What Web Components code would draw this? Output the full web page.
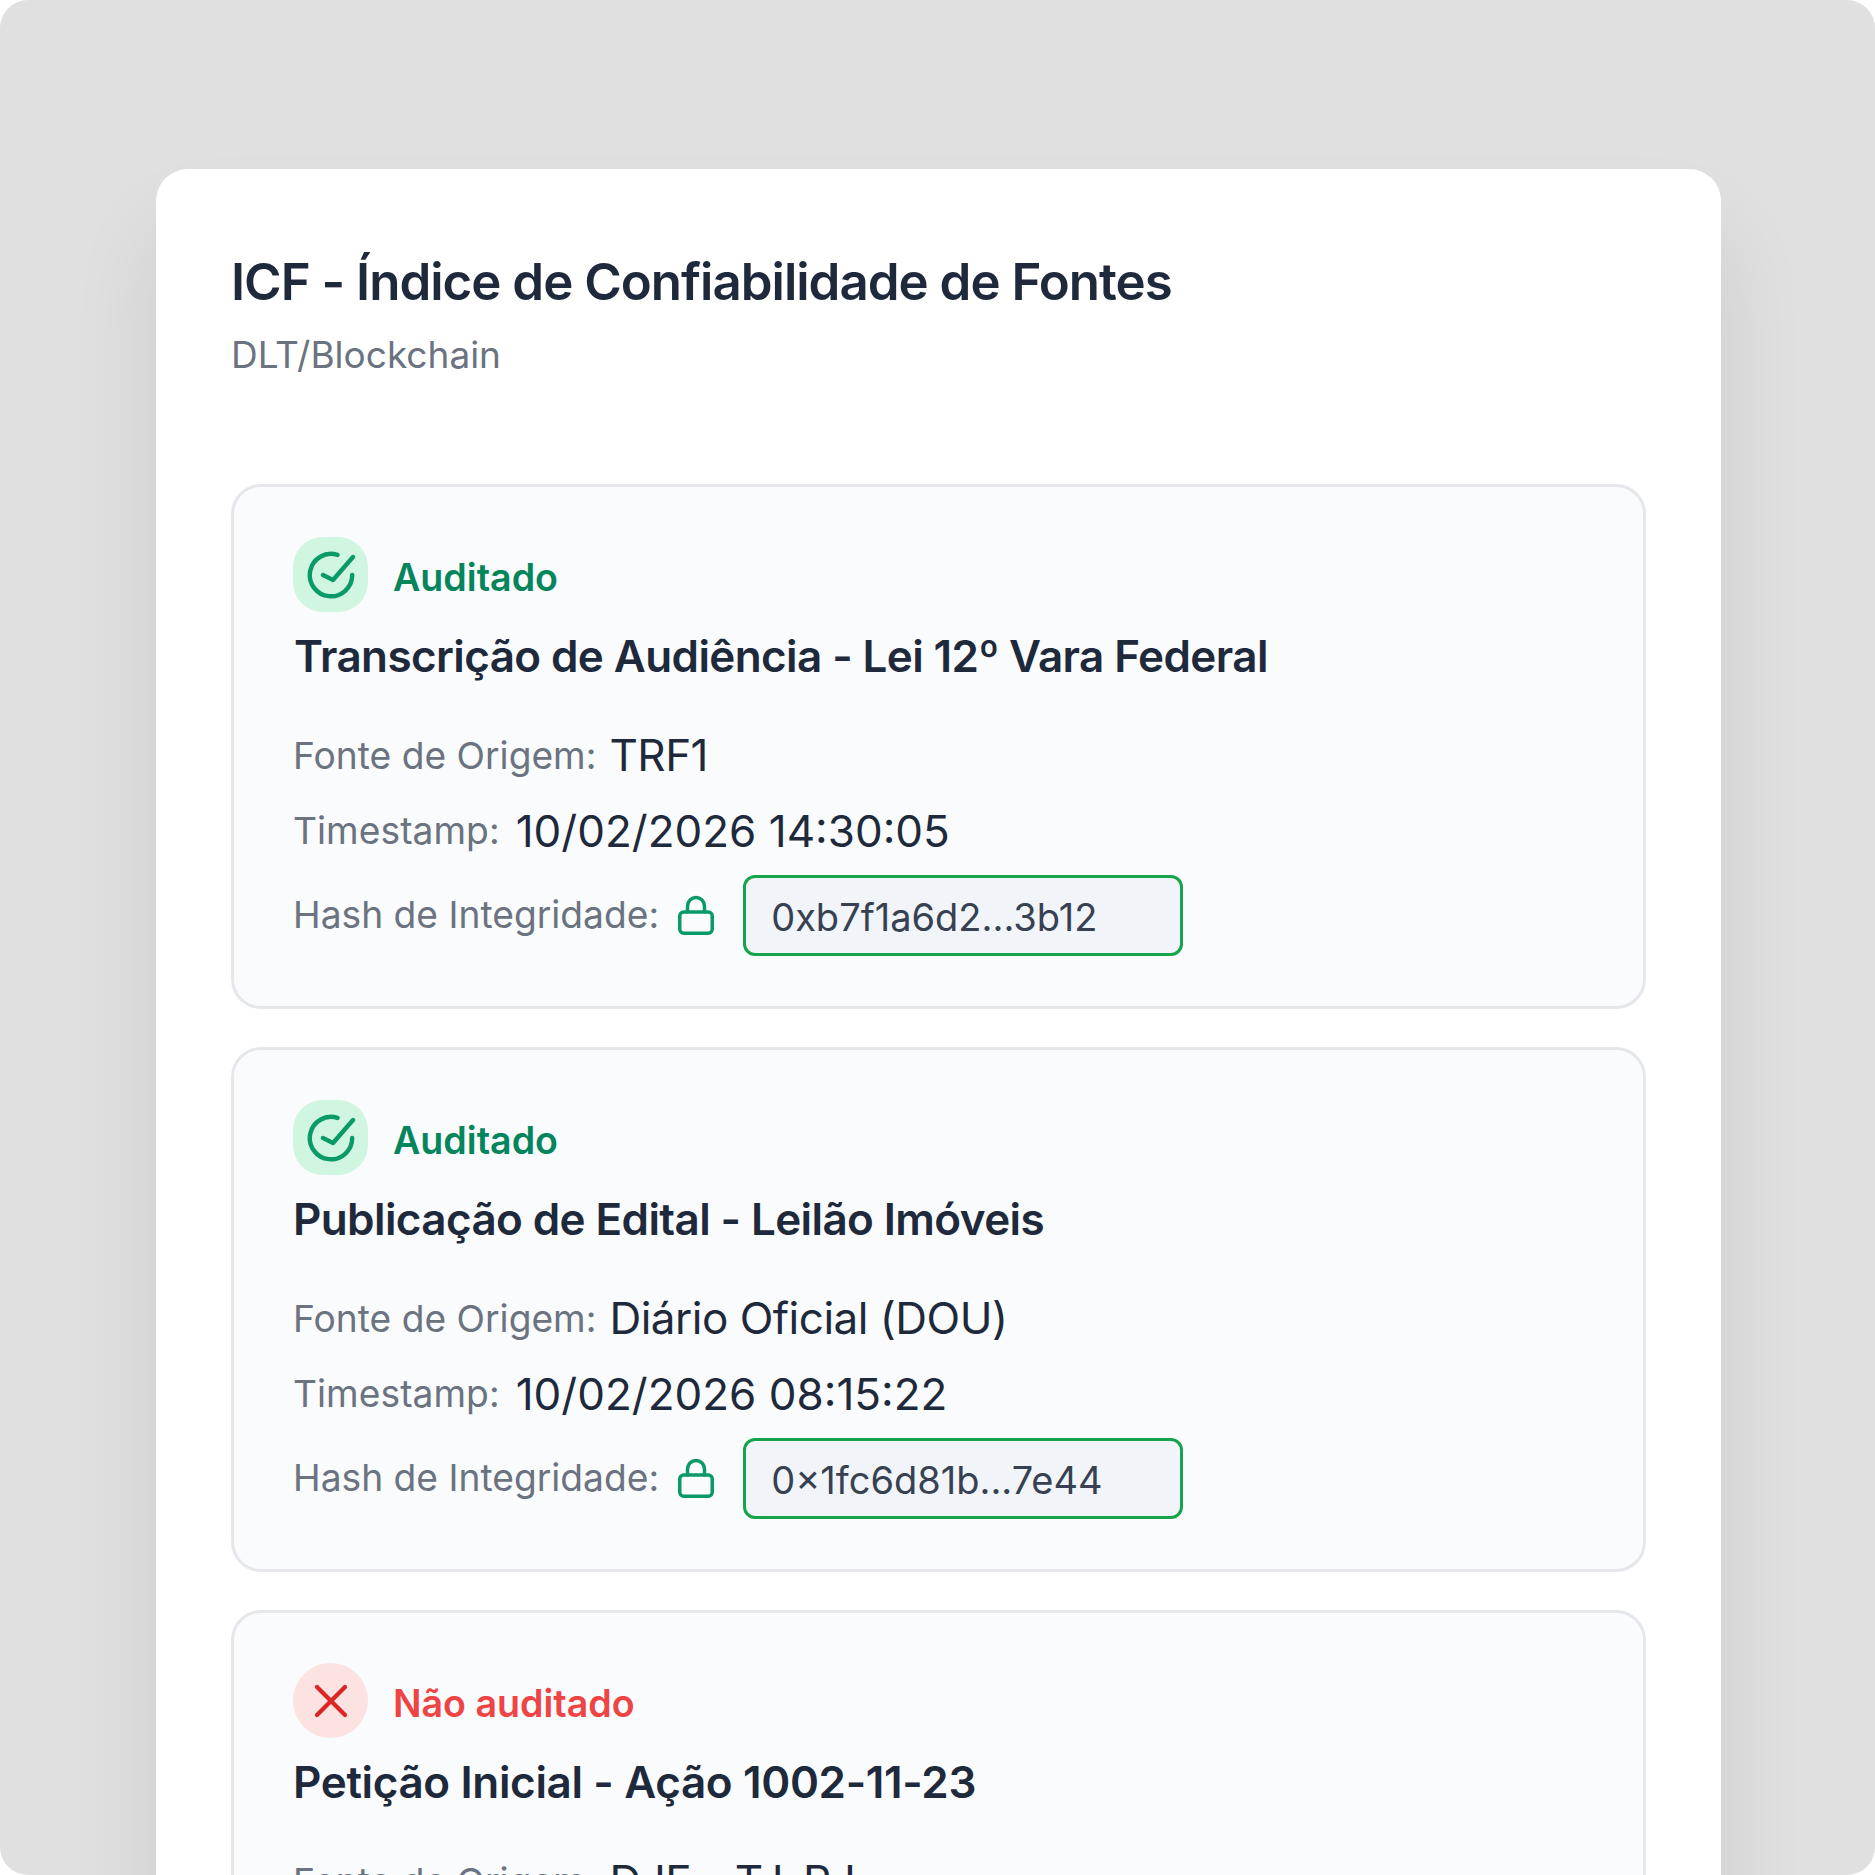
<!DOCTYPE html>
<html lang="pt">
<head>
<meta charset="utf-8">
<title>ICF</title>
<style>
  html, body { margin: 0; background: #fff; }
  body { font-family: Inter, "Noto Sans", sans-serif; }
</style>
</head>
<body>
<icf-page>
  <icf-record nudge status="ok" heading="Transcrição de Audiência - Lei 12º Vara Federal" source="TRF1" stamp="10/02/2026 14:30:05" hash="0xb7f1a6d2...3b12"></icf-record>
  <icf-record status="ok" heading="Publicação de Edital - Leilão Imóveis" source="Diário Oficial (DOU)" stamp="10/02/2026 08:15:22" hash="0×1fc6d81b...7e44"></icf-record>
  <icf-record status="bad" heading="Petição Inicial - Ação 1002-11-23" source="DJE - TJ-RJ" stamp="09/02/2026 17:42:10" hash="Não disponível"></icf-record>
</icf-page>
<script>
class IcfPage extends HTMLElement {
  connectedCallback() {
    this.attachShadow({ mode: 'open' });
    this.shadowRoot.innerHTML = `
      <style>
        :host {
          display: block;
          height: 1875px;
          box-sizing: border-box;
          padding: 169px 154px 0 156px;
          background: #e0e0e0;
          border-radius: 28px;
          overflow: hidden;
        }
        .panel {
          background: #fff;
          border-radius: 32px;
          padding: 83px 75px 75px;
          box-shadow: 0 60px 90px rgba(0, 0, 0, 0.09);
        }
        h1 {
          margin: 0;
          font-size: 51px;
          line-height: 60px;
          font-weight: 600;
          letter-spacing: -1px;
          color: #1e293b;
        }
        .sub {
          margin: 20px 0 0;
          font-size: 37px;
          line-height: 46px;
          color: #6b7280;
        }
        .list {
          display: flex;
          flex-direction: column;
          gap: 38px;
          margin-top: 106px;
        }
      </style>
      <div class="panel">
        <h1>ICF - Índice de Confiabilidade de Fontes</h1>
        <p class="sub">DLT/Blockchain</p>
        <div class="list"><slot></slot></div>
      </div>
    `;
  }
}

const ICONS = {
  ok: `<svg width="50" height="50" viewBox="0 0 50 50" fill="none" stroke="#0a9a68" stroke-width="4.4" stroke-linecap="round" stroke-linejoin="round">
      <path d="M31.5 4.9A21.2 21.2 0 1 0 46.2 25"/><path d="M17 25l10 5 20-23"/></svg>`,
  bad: `<svg width="36" height="36" viewBox="0 0 36 36" fill="none" stroke="#dc2626" stroke-width="4.2" stroke-linecap="round">
      <line x1="4" y1="4" x2="32" y2="32"/><line x1="32" y1="4" x2="4" y2="32"/></svg>`
};

class IcfRecord extends HTMLElement {
  connectedCallback() {
    const status = this.getAttribute('status');
    this.attachShadow({ mode: 'open' });
    this.shadowRoot.innerHTML = `
      <style>
        :host {
          display: block;
          box-sizing: border-box;
          height: 525px;
          padding: 50px 59px 0;
          background: #f9fbfd;
          border: 3px solid #e5e7eb;
          border-radius: 30px;
        }
        .status {
          display: flex;
          align-items: center;
          gap: 25px;
        }
        .badge {
          width: 75px;
          height: 75px;
          display: flex;
          align-items: center;
          justify-content: center;
          border-radius: 30px;
          background: #d0f6e1;
        }
        :host([status="bad"]) .badge {
          border-radius: 50%;
          background: #fde2e2;
        }
        .label {
          font-size: 37.6px;
          font-weight: 600;
          color: #05855c;
          padding-top: 5px;
        }
        :host([status="bad"]) .label {
          color: #ef4444;
        }
        h2 {
          margin: 16px 0 0;
          font-size: 44px;
          line-height: 56px;
          font-weight: 600;
          letter-spacing: -0.6px;
          color: #1e293b;
        }
        :host([nudge]) h2 { margin-left: 1px; }
        :host([status="bad"]) h2 { letter-spacing: -0.35px; }
        .row {
          display: flex;
          align-items: center;
          color: #6b7280;
          font-size: 37.2px;
        }
        .row span:first-child { padding-bottom: 2px; }
        .row b {
          font-weight: 400;
          font-size: 44px;
          color: #1e293b;
        }
        .src span:first-child { padding-bottom: 0; }
        .src b { margin-left: 13px; letter-spacing: -0.5px; }
        .time b { margin-left: 16px; }
        .time span:first-child { letter-spacing: 0.05px; }
        .src { margin-top: 41px; height: 60px; }
        .time { margin-top: 16px; height: 60px; }
        .hash { margin-top: 12px; height: 84px; }
        svg.lock { margin-left: 19px; }
        .box {
          box-sizing: border-box;
          width: 440px;
          height: 81px;
          margin-left: 29px;
          padding: 3px 25px 0;
          display: flex;
          align-items: center;
          border: 3px solid #16a34a;
          border-radius: 12px;
          background: #f1f5f9;
          font-size: 38px;
          color: #374151;
        }
      </style>
      <div class="status">
        <span class="badge">${ICONS[status]}</span>
        <span class="label">${status === 'ok' ? 'Auditado' : 'Não auditado'}</span>
      </div>
      <h2>${this.getAttribute('heading')}</h2>
      <div class="row src"><span>Fonte de Origem:</span><b>${this.getAttribute('source')}</b></div>
      <div class="row time"><span>Timestamp:</span><b>${this.getAttribute('stamp')}</b></div>
      <div class="row hash"><span>Hash de Integridade:</span>
        <svg class="lock" width="36" height="40" viewBox="0 0 36 40" fill="none" stroke="#0a9a68" stroke-width="3.5" stroke-linecap="round" stroke-linejoin="round">
          <rect x="1.75" y="17" width="32.5" height="21.25" rx="4"/><path d="M9.5 17V11a8.5 8.5 0 0 1 17 0v6"/></svg>
        <span class="box">${this.getAttribute('hash')}</span>
      </div>
    `;
  }
}

customElements.define('icf-page', IcfPage);
customElements.define('icf-record', IcfRecord);
</script>
</body>
</html>
